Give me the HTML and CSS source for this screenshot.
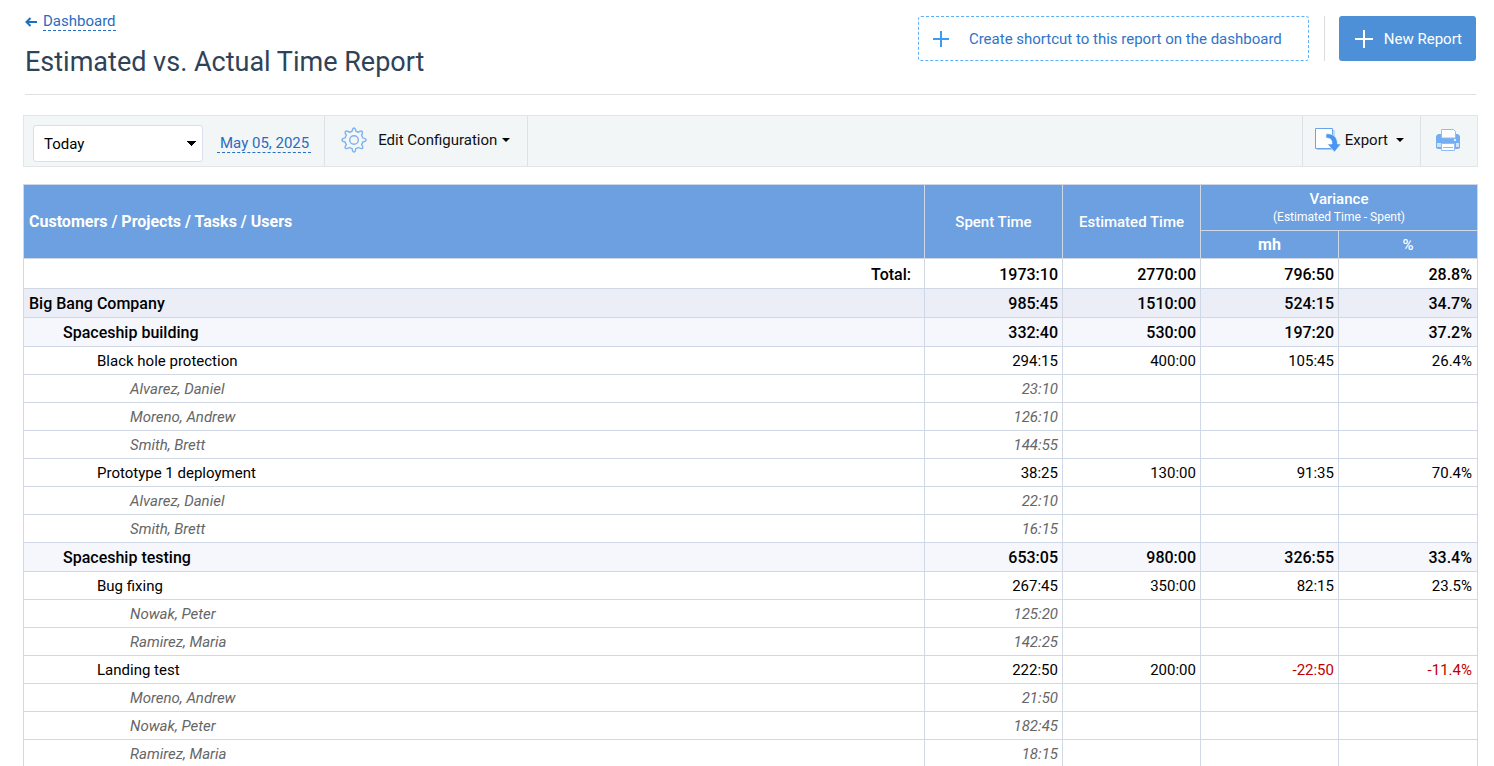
FILE: index.html
```html
<!DOCTYPE html>
<html lang="en">
<head>
    <meta charset="UTF-8">
    <meta name="viewport" content="width=device-width, initial-scale=1.0">
    <title>Estimated vs. Actual Time Report</title>
    <link rel="stylesheet" href="styles.css">
</head>
<body>
    <header class="page-header">
        <div class="heading">
            <a class="back" href="#">
                <svg width="12" height="10" viewBox="0 0 12 10" fill="none" stroke="#1a6fc0" stroke-width="2"><path d="M1.5 5H12M5.5 1L1.5 5l4 4"/></svg>
                <span class="dashed">Dashboard</span>
            </a>
            <h1>Estimated vs. Actual Time Report</h1>
        </div>
        <div class="actions">
            <button type="button" class="shortcut">
                <svg width="16" height="16" viewBox="0 0 16 16" stroke="#3d9bf5" stroke-width="2"><path d="M8 0v16M0 8h16"/></svg>
                Create shortcut to this report on the dashboard
            </button>
            <div class="new-wrap">
                <button type="button" class="new-report">
                    <svg width="18" height="18" viewBox="0 0 18 18" stroke="#fff" stroke-width="2"><path d="M9 0v18M0 9h18"/></svg>
                    New Report
                </button>
            </div>
        </div>
    </header>

    <div class="toolbar">
        <div class="period">
            <select class="range" aria-label="Period">
                <option>Today</option>
            </select>
            <a class="date dashed" href="#">May 05, 2025</a>
        </div>
        <button type="button" class="tool config">
            <svg width="26" height="26" viewBox="0 0 26 26" fill="none" stroke="#7fb2f0" stroke-width="1.4" stroke-linejoin="round"><path d="M11.1 4.2Q11.6 1 13 1t1.9 3.2q1.4.3 2.6 1.1 2.6-1.9 3.6-.9t-.5 3.8q.8 1.2 1.1 2.7 3.3.5 3.3 2.1t-3.3 2q-.3 1.4-1.1 2.7 1.9 2.6.9 3.6t-3.9-.8q-1.3.8-2.8 1.1Q14.4 25 13 25t-1.9-3.4q-1.5-.3-2.8-1.1-2.7 1.8-3.8.8t.8-3.6q-.8-1.3-1.1-2.7Q1 14.5 1 13t3.2-2.1q.3-1.5 1.1-2.7-1.8-2.8-.8-3.8t3.9.9q1.3-.8 2.7-1.1z"/><circle cx="13" cy="13" r="4.3"/></svg>
            Edit Configuration
            <span class="caret"></span>
        </button>
        <button type="button" class="tool export">
            <svg width="26" height="26" viewBox="0 0 26 26"><path d="M2 3h17v20H2z" fill="#a9cdf6"/><path d="M18 3h2v7h-2z" fill="#bcd7f7"/><path d="M.5 1.5h17v20H.5z" fill="#fff" stroke="#6aa5ec"/><path d="M11 7C18 6 22.500 10 22.500 17H26l-6.500 8L12.500 17H17c0-4-1-6-6-6z" fill="#4a95f0" stroke="#f2f6f7" stroke-width=".6"/></svg>
            Export
            <span class="caret"></span>
        </button>
        <button type="button" class="tool print" aria-label="Print">
            <svg width="24" height="22" viewBox="0 0 24 22"><path d="M2 5h20l2 2v12l-2 1H2l-2-1V7z" fill="#74adf2"/><path d="M5.5.5h12l2 2V9h-14z" fill="#fff" stroke="#8fbdf5"/><path d="M1 14h4v4H1zM20 14h3v4h-3z" fill="#cfe2fa"/><path d="M18 10h2v2h-2z" fill="#e3effc"/><path d="M5.5 14.5h13v7h-13z" fill="#fff" stroke="#8fbdf5"/><path d="M7 18h10v1H7z" fill="#8fbdf5"/></svg>
        </button>
    </div>

    <table class="report">
        <colgroup>
            <col>
            <col class="num">
            <col class="num">
            <col class="num">
            <col class="num-last">
        </colgroup>
        <thead>
            <tr class="head-top">
                <th class="name" rowspan="2">Customers / Projects / Tasks / Users</th>
                <th rowspan="2">Spent Time</th>
                <th rowspan="2">Estimated Time</th>
                <th colspan="2">Variance<span class="note">(Estimated Time - Spent)</span></th>
            </tr>
            <tr class="head-sub">
                <th class="mh">mh</th>
                <th>%</th>
            </tr>
        </thead>
        <tbody>
            <tr class="total"><td>Total:</td><td>1973:10</td><td>2770:00</td><td>796:50</td><td>28.8%</td></tr>
            <tr class="customer"><td>Big Bang Company</td><td>985:45</td><td>1510:00</td><td>524:15</td><td>34.7%</td></tr>
            <tr class="project"><td>Spaceship building</td><td>332:40</td><td>530:00</td><td>197:20</td><td>37.2%</td></tr>
            <tr class="task"><td>Black hole protection</td><td>294:15</td><td>400:00</td><td>105:45</td><td>26.4%</td></tr>
            <tr class="user"><td>Alvarez, Daniel</td><td>23:10</td><td></td><td></td><td></td></tr>
            <tr class="user"><td>Moreno, Andrew</td><td>126:10</td><td></td><td></td><td></td></tr>
            <tr class="user"><td>Smith, Brett</td><td>144:55</td><td></td><td></td><td></td></tr>
            <tr class="task"><td>Prototype 1 deployment</td><td>38:25</td><td>130:00</td><td>91:35</td><td>70.4%</td></tr>
            <tr class="user"><td>Alvarez, Daniel</td><td>22:10</td><td></td><td></td><td></td></tr>
            <tr class="user"><td>Smith, Brett</td><td>16:15</td><td></td><td></td><td></td></tr>
            <tr class="project"><td>Spaceship testing</td><td>653:05</td><td>980:00</td><td>326:55</td><td>33.4%</td></tr>
            <tr class="task"><td>Bug fixing</td><td>267:45</td><td>350:00</td><td>82:15</td><td>23.5%</td></tr>
            <tr class="user"><td>Nowak, Peter</td><td>125:20</td><td></td><td></td><td></td></tr>
            <tr class="user"><td>Ramirez, Maria</td><td>142:25</td><td></td><td></td><td></td></tr>
            <tr class="task"><td>Landing test</td><td>222:50</td><td>200:00</td><td class="negative">-22:50</td><td class="negative">-11.4%</td></tr>
            <tr class="user"><td>Moreno, Andrew</td><td>21:50</td><td></td><td></td><td></td></tr>
            <tr class="user"><td>Nowak, Peter</td><td>182:45</td><td></td><td></td><td></td></tr>
            <tr class="user"><td>Ramirez, Maria</td><td>18:15</td><td></td><td></td><td></td></tr>
        </tbody>
    </table>
</body>
</html>
```

FILE: styles.css
```css
* {
    box-sizing: border-box;
}
body {
    margin: 0;
    padding: 0 16px 0 23px;
    font-family: Roboto, Arial, sans-serif;
    font-size: 15px;
    color: #000;
    background-color: #fff;
}
button, select {
    font: inherit;
    cursor: pointer;
}
svg {
    flex: none;
}

/* header */
.page-header {
    display: flex;
    justify-content: space-between;
    margin: 0 2px;
    height: 95px;
    border-bottom: 1px solid #e0e0e0;
}
.heading {
    padding-top: 12px;
}
.back {
    display: inline-flex;
    align-items: center;
    gap: 6px;
    text-decoration: none;
}
.dashed {
    color: #2a6cc0;
    line-height: 18px;
    text-decoration: none;
    border-bottom: 1px dashed #2a6cc0;
}
h1 {
    margin: 13px 0 0;
    font-size: 27px;
    font-weight: 400;
    line-height: 36px;
    color: #2f4358;
}
.actions {
    display: flex;
    gap: 15px;
    padding-top: 16px;
}
.actions button {
    display: flex;
    align-items: center;
    height: 45px;
    border-radius: 3px;
}
.shortcut {
    gap: 20px;
    padding: 0 26px 0 14px;
    color: #2f74c8;
    background-color: #fff;
    border: 1px dashed #5fb0fa;
}
.new-wrap {
    height: 45px;
    padding-left: 14px;
    border-left: 1px solid #dcdcdc;
}
.new-report {
    gap: 11px;
    padding: 0 14px 0 16px;
    color: #fff;
    background-color: #4d90d8;
    border: none;
}

/* toolbar */
.toolbar {
    display: flex;
    height: 52px;
    margin: 20px 0 17px;
    background-color: #f2f6f7;
    border: 1px solid #e2e6e8;
}
.period {
    display: flex;
    align-items: center;
    gap: 14px;
    padding: 4px 13px 0 9px;
}
.range {
    appearance: none;
    width: 170px;
    height: 37px;
    padding: 2px 10px 0;
    color: #000;
    background-color: #fff;
    background-image: conic-gradient(from -45deg at 50% 100%, #000 90deg, transparent 0);
    background-position: right 6px center;
    background-size: 9px 5px;
    background-repeat: no-repeat;
    border: 1px solid #d9dfeb;
    border-radius: 3px;
}
.date {
    padding: 0 2px 0 3px;
}
.tool {
    display: flex;
    align-items: center;
    padding: 0 16px 3px;
    color: #111;
    background: none;
    border: 0 solid #dde2e4;
    border-left-width: 1px;
}
.caret {
    margin-left: 5px;
    border: 4px solid transparent;
    border-top-color: #000;
    border-bottom: none;
}
.config {
    padding-right: 17px;
    border-right-width: 1px;
}
.config svg {
    margin-right: 11px;
}
.export {
    margin-left: auto;
    padding-left: 12px;
}
.export svg {
    margin-right: 4px;
}
.export .caret {
    margin-left: 8px;
}
.print {
    padding-left: 15px;
    padding-right: 17px;
}

/* report table */
.report {
    width: 100%;
    table-layout: fixed;
    border-collapse: collapse;
}
.num {
    width: 138px;
}
.num-last {
    width: 139px;
}
.report th, .report td {
    height: 28px;
    padding: 0 4px;
    border: 1px solid #cfd8e4;
    text-align: right;
    line-height: 20px;
}
.report td:last-child {
    padding-right: 5px;
}
.report th {
    color: #fff;
    background-color: #6ca0e0;
    font-weight: 500;
    text-align: center;
}
.report .head-top th {
    height: 46px;
    line-height: 18px;
}
.report .name {
    padding-left: 5px;
    font-size: 16px;
    font-weight: 700;
    text-align: left;
}
.report .mh {
    font-size: 16px;
    font-weight: 700;
}
.note {
    display: block;
    font-size: 12px;
    font-weight: 400;
}
.report .total td, .report .customer td, .report .project td {
    height: 29px;
    padding-top: 2px;
    font-size: 16px;
    font-weight: 500;
}
.report .total td {
    height: 30px;
}
.report .total td:first-child {
    padding-right: 13px;
}
.customer {
    background-color: #ebeef6;
}
.project {
    background-color: #f5f7fd;
}
.report .customer td:first-child {
    padding-left: 5px;
    text-align: left;
}
.report .project td:first-child {
    padding-left: 39px;
    text-align: left;
}
.report .task td:first-child {
    padding-left: 73px;
    text-align: left;
}
.report .user td:first-child {
    padding-left: 106px;
    text-align: left;
}
.user {
    color: #666;
    font-style: italic;
}
.negative {
    color: #c00000;
}
```
